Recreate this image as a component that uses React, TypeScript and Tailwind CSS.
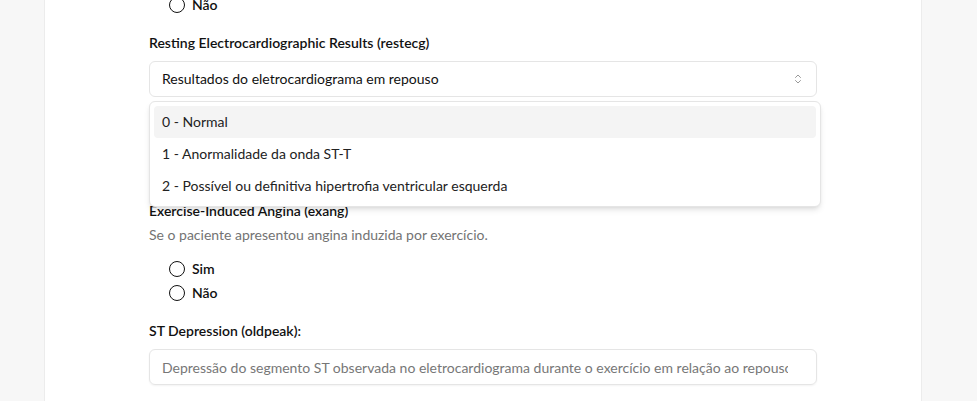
import { ChevronsUpDown } from "lucide-react";

const font = { fontFamily: '"Segoe UI", Lato, "Noto Sans", sans-serif' };

function Radio({ label }: { label: string }) {
  return (
    <label className="flex h-6 items-center gap-[7px] pl-5">
      <span className="h-4 w-4 rounded-full border-[1.5px] border-[#111]" />
      <span className="text-sm font-semibold text-[#111]">{label}</span>
    </label>
  );
}

const options = [
  "0 - Normal",
  "1 - Anormalidade da onda ST-T",
  "2 - Possível ou definitiva hipertrofia ventricular esquerda",
];

export default function App() {
  return (
    <div className="h-[401px] overflow-hidden bg-[#f7f7f7] pl-[44px]" style={font}>
      <div className="h-[440px] w-[878px] border-x border-[#ececec] bg-white px-[104px]">
        <div className="-mt-[7px] flex flex-col gap-4">
          <div>
            <Radio label="Não" />
          </div>

          <div className="relative z-10">
            <p className="mb-2 text-sm leading-5 font-semibold text-[#111]">
              Resting Electrocardiographic Results (restecg)
            </p>
            <button className="flex h-9 w-full items-center justify-between rounded-md border border-[#e5e5e5] bg-white px-3 text-sm text-[#111]">
              Resultados do eletrocardiograma em repouso
              <ChevronsUpDown className="h-3 w-3 text-[#999]" />
            </button>

            <div className="absolute top-full left-0 mt-1 w-[672px] rounded-md border border-[#e5e5e5] bg-white p-1 shadow-md">
              {options.map((o, i) => (
                <div
                  key={o}
                  className={`flex h-8 items-center rounded px-2 text-sm text-[#222] ${
                    i === 0 ? "bg-[#f4f4f4]" : ""
                  }`}
                >
                  {o}
                </div>
              ))}
            </div>
          </div>

          {/* covered by the open list */}
          <div className="mb-2">
            <p className="mb-2 text-sm leading-5 font-semibold text-[#111]">
              Maximum Heart Rate Achieved (thalach)
            </p>
            <div className="h-9 rounded-md border border-[#e5e5e5]" />
          </div>

          <div>
            <p className="text-sm leading-5 font-semibold text-[#111]">
              Exercise-Induced Angina (exang)
            </p>
            <p className="mt-1 text-sm leading-5 text-[#737373]">
              Se o paciente apresentou angina induzida por exercício.
            </p>
            <div className="mt-3">
              <Radio label="Sim" />
              <Radio label="Não" />
            </div>
          </div>

          <div>
            <p className="mb-2 text-sm leading-5 font-semibold text-[#111]">
              ST Depression (oldpeak):
            </p>
            <input
              readOnly
              placeholder="Depressão do segmento ST observada no eletrocardiograma durante o exercício em relação ao repouso"
              className="h-9 w-full rounded-md border border-[#e5e5e5] pr-7 pl-3 text-sm shadow-xs placeholder:text-[#777]"
            />
          </div>
        </div>
      </div>
    </div>
  );
}
